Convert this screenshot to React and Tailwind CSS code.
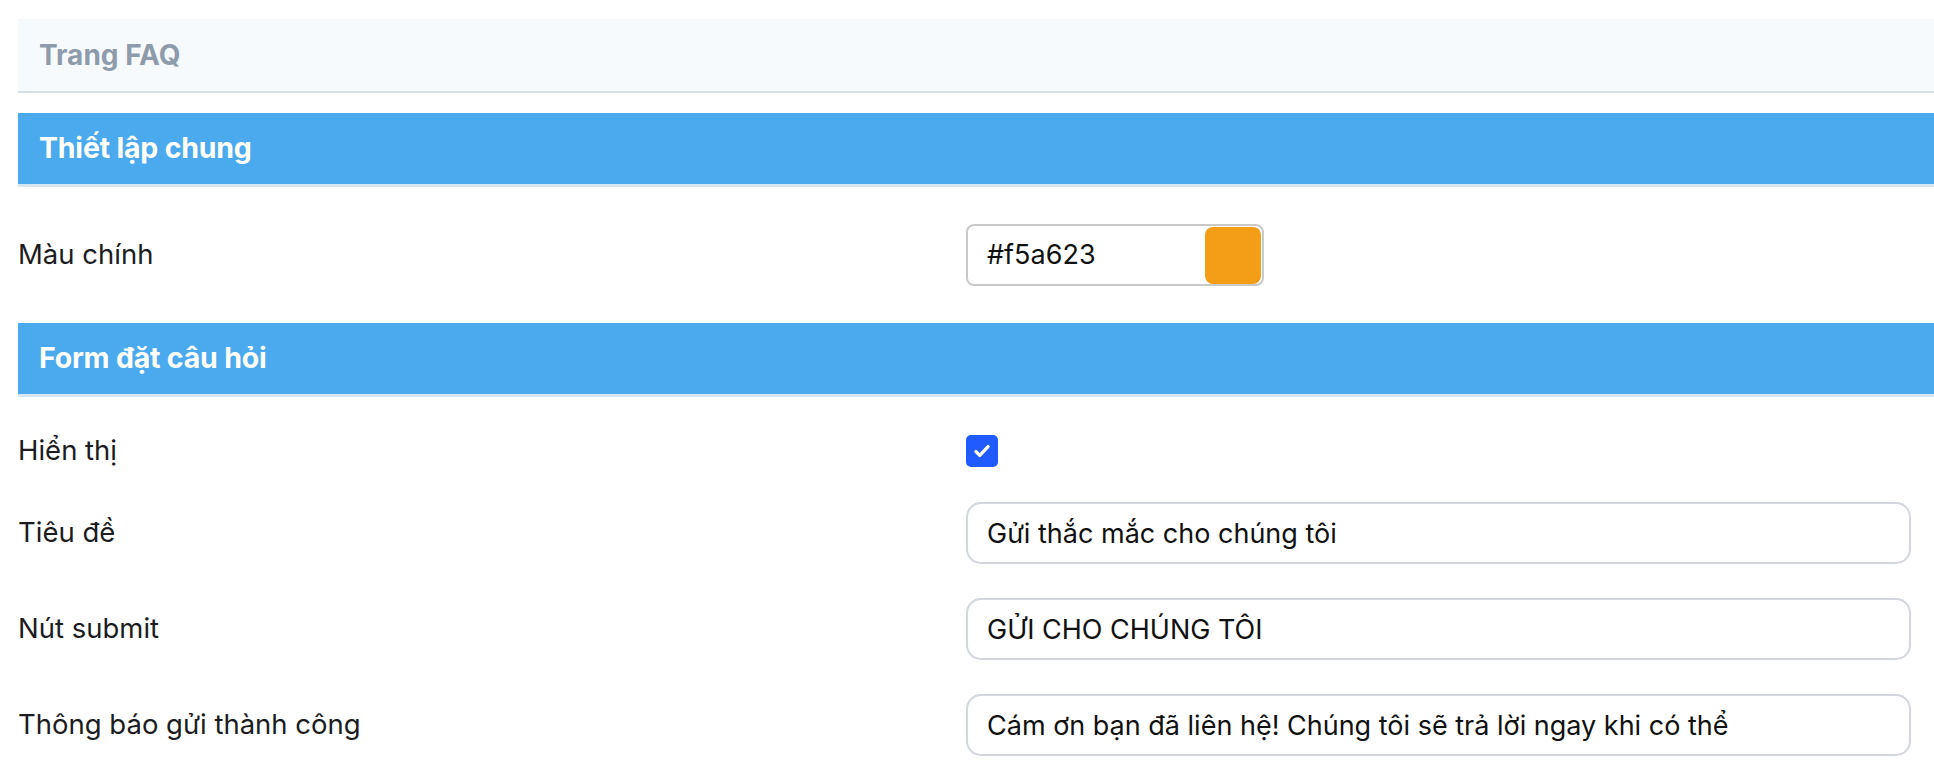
import React from "react";

const font = { fontFamily: "Inter, 'Noto Sans', sans-serif" };

const SectionBar = ({ title }) => (
  <div className="h-[74px] bg-[#4aaaed] border-b-[3px] border-[#d8e6f1] flex items-center pl-[21px]">
    <h2 className="text-[28.5px] font-bold text-white tracking-[-0.2px]">{title}</h2>
  </div>
);

const Row = ({ label, className = "", children }) => (
  <div className={`grid grid-cols-[948px_1fr] items-center pr-[23px] ${className}`}>
    <label className="text-[27.5px] leading-none text-[#1c1c1e]">{label}</label>
    <div className="flex">{children}</div>
  </div>
);

const TextField = ({ value }) => (
  <input
    readOnly
    value={value}
    className="w-full h-[62px] rounded-[15px] border-2 border-[#d3d6dc] bg-white px-[19px] text-[27px] text-[#111] outline-none"
    style={font}
  />
);

export default function App() {
  return (
    <div className="min-h-screen bg-white pt-[19px] pl-[18px]" style={font}>
      <div className="h-[74px] bg-[#f7fafc] border-b-2 border-[#d6dfe6] flex items-center pl-[21px]">
        <h1 className="text-[28px] font-bold text-[#8e9bab]">Trang FAQ</h1>
      </div>

      <div className="mt-[20px]">
        <SectionBar title="Thiết lập chung" />
      </div>

      <Row label="Màu chính" className="py-[37px]">
        <div className="w-[298px] h-[62px] rounded-[8px] border-2 border-[#c9c9c9] flex items-center justify-between pl-[19px] pr-[1px]">
          <span className="text-[27px] text-[#111]">#f5a623</span>
          <span className="w-[56px] h-[57px] rounded-[8px] bg-[#f49e18]"></span>
        </div>
      </Row>

      <SectionBar title="Form đặt câu hỏi" />

      <Row label="Hiển thị" className="pt-[38px]">
        <span className="w-[32px] h-[32px] rounded-[5px] bg-[#1f5bff] flex items-center justify-center">
          <svg width="22" height="22" viewBox="0 0 20 20" fill="none">
            <path d="M4.5 10.5l3.5 3.5 7.5-8" stroke="white" strokeWidth="3" strokeLinecap="round" strokeLinejoin="round" />
          </svg>
        </span>
      </Row>

      <Row label="Tiêu đề" className="mt-[35px]">
        <TextField value="Gửi thắc mắc cho chúng tôi" />
      </Row>

      <Row label="Nút submit" className="mt-[34px]">
        <TextField value="GỬI CHO CHÚNG TÔI" />
      </Row>

      <Row label="Thông báo gửi thành công" className="mt-[34px]">
        <TextField value="Cám ơn bạn đã liên hệ! Chúng tôi sẽ trả lời ngay khi có thể" />
      </Row>
    </div>
  );
}
